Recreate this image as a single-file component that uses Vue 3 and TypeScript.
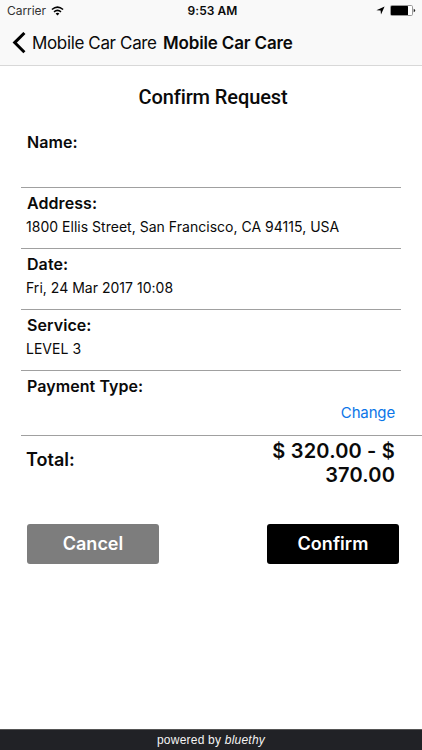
<script setup lang="ts">
interface Field {
  label: string
  value: string
  key: string
}

const fields: Field[] = [
  { key: 'name', label: 'Name:', value: '' },
  { key: 'address', label: 'Address:', value: '1800 Ellis Street, San Francisco, CA 94115, USA' },
  { key: 'date', label: 'Date:', value: 'Fri, 24 Mar 2017 10:08' },
  { key: 'service', label: 'Service:', value: 'LEVEL 3' },
]
</script>

<template>
  <div class="screen">
    <header class="top">
      <div class="status">
        <div class="side">
          <span class="carrier">Carrier</span>
          <svg class="wifi" width="13" height="10" viewBox="0 0 13 10" fill="none" stroke="#000">
            <path d="M0.9 3.5Q6.5 -1.3 12.1 3.5" stroke-width="1.5" />
            <path d="M3 5.8Q6.5 2.9 10 5.8" stroke-width="1.5" />
            <path d="M4.6 7.4Q6.5 5.9 8.4 7.4L6.5 9.4Z" fill="#000" stroke="none" />
          </svg>
        </div>
        <span class="time">9:53 AM</span>
        <div class="side right">
          <svg class="location" width="9" height="9" viewBox="0 0 9 9">
            <path d="M8.6 0.4L5 8.6L4.6 4.6L0.4 4.3Z" fill="#000" />
          </svg>
          <svg class="battery" width="26" height="11" viewBox="0 0 26 11">
            <rect x="0.5" y="0.5" width="22" height="10" rx="1.2" fill="#fff" stroke="#999" />
            <rect x="1" y="1" width="17" height="9" rx="0.5" fill="#000" />
            <path d="M23.7 3.7Q25.2 4.2 25.2 5.5T23.7 7.3Z" fill="#222" />
          </svg>
        </div>
      </div>
      <nav class="nav">
        <svg class="chevron" width="14" height="22" viewBox="0 0 14 22">
          <path d="M12.4 1L2.7 10.6L12.4 20.2" fill="none" stroke="#000" stroke-width="3" />
        </svg>
        <span class="back">Mobile Car Care</span>
        <span class="nav-title">Mobile Car Care</span>
      </nav>
    </header>

    <main class="content">
      <h1>Confirm Request</h1>
      <section v-for="field in fields" :key="field.key" class="field">
        <h2>{{ field.label }}</h2>
        <p :class="field.key">{{ field.value }}</p>
      </section>
      <section class="payment">
        <h2 class="payment-label">Payment Type:</h2>
        <a class="change">Change</a>
      </section>
      <section class="total">
        <span class="total-label">Total:</span>
        <strong class="amount">$ 320.00 - $<br />370.00</strong>
      </section>
      <div class="actions">
        <button class="cancel" type="button">Cancel</button>
        <button class="confirm" type="button">Confirm</button>
      </div>
    </main>

    <footer class="footer"><span>powered by <em>bluethy</em></span></footer>
  </div>
</template>

<style>
body {
  margin: 0;
  background: #fff;
}
</style>

<style scoped>
.screen {
  display: flex;
  flex-direction: column;
  width: 422px;
  height: 750px;
  overflow: hidden;
  background: #fff;
  color: #0a0a0a;
  font-family: Inter, "Liberation Sans", sans-serif;
  white-space: nowrap;
}
.top {
  box-sizing: border-box;
  height: 66px;
  background: #f9f9f9;
  border-bottom: 1px solid #d8d8d8;
}
.status {
  display: flex;
  align-items: center;
  height: 21px;
  padding: 0 6px 0 7px;
}
.side {
  display: flex;
  flex: 1;
  align-items: center;
}
.right {
  justify-content: flex-end;
}
.carrier {
  font-size: 12px;
  letter-spacing: -0.05px;
  color: #333;
}
.wifi {
  margin-left: 5px;
}
.time {
  padding-left: 2px;
  font-size: 12px;
  font-weight: 600;
  letter-spacing: 0.05px;
}
.location {
  margin-right: 5px;
}
.nav {
  display: flex;
  align-items: center;
  height: 44px;
  padding-left: 12px;
  font-size: 17px;
}
.chevron {
  margin-right: 6px;
}
.back {
  width: 131px;
  letter-spacing: -0.36px;
}
.nav-title {
  font-weight: 600;
  letter-spacing: -0.15px;
}
.content {
  flex: 1;
  padding-left: 21px;
}
h1 {
  height: 61px;
  margin: 0;
  padding-right: 17px;
  box-sizing: border-box;
  font: 500 20px/62px Roboto, sans-serif;
  letter-spacing: -0.1px;
  text-align: center;
}
.field {
  box-sizing: border-box;
  width: 380px;
  height: 61px;
  padding: 4px 0 0 5px;
  border-bottom: 1px solid #a0a0a0;
}
h2 {
  margin: 0 0 0 1px;
  font-size: 16px;
  font-weight: 600;
  line-height: 22px;
  letter-spacing: 0.07px;
}
p {
  margin: 0;
  padding-top: 1px;
  font-size: 14px;
  line-height: 24px;
  letter-spacing: 0.02px;
}
.payment {
  box-sizing: border-box;
  display: flex;
  flex-direction: column;
  height: 65px;
  padding: 4px 27px 0 5px;
  border-bottom: 1px solid #a0a0a0;
}
.change {
  align-self: flex-end;
  padding-top: 5px;
  font-size: 15px;
  line-height: 22px;
  letter-spacing: -0.15px;
  color: #0b76e8;
}
.total {
  display: flex;
  justify-content: space-between;
  align-items: flex-start;
  height: 88px;
  padding: 3px 27px 0 5px;
  box-sizing: border-box;
}
.total-label {
  padding-top: 9px;
  font-size: 18px;
  font-weight: 600;
  line-height: 24px;
}
.amount {
  font-size: 20px;
  font-weight: 600;
  line-height: 24px;
  letter-spacing: 0.18px;
  text-align: right;
}
.actions {
  display: flex;
  justify-content: space-between;
  padding: 0 23px 0 6px;
}
button {
  width: 132px;
  height: 40px;
  padding: 0;
  border: 0;
  border-radius: 3px;
  background: #000;
  color: #fff;
  font: 600 18px/38px Inter, sans-serif;
}
.cancel {
  background: #7d7d7d;
}
.confirm {
  letter-spacing: 0.05px;
}
.footer {
  box-sizing: border-box;
  height: 21px;
  border-top: 1px solid #555;
  background: #212226;
  color: #f4f4f4;
  font: 12px/21px "Liberation Sans", sans-serif;
  letter-spacing: 0.22px;
  text-align: center;
}
</style>
